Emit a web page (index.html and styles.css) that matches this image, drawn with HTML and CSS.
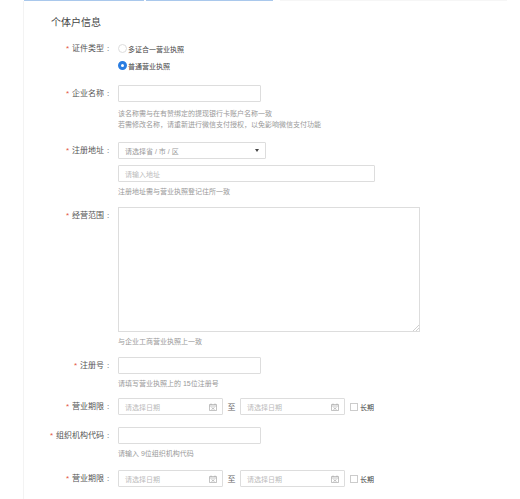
FILE: index.html
```html
<!DOCTYPE html>
<html lang="zh-CN">
<head>
    <meta charset="UTF-8">
    <title>个体户信息</title>
    <link rel="stylesheet" href="styles.css">
</head>
<body>
    <div class="tabs">
        <div class="tab tab-one"></div>
        <div class="tab tab-two"></div>
        <div class="tab tab-rest"></div>
    </div>
    <div class="panel">
        <h2 class="title">个体户信息</h2>

        <div class="row row-type">
            <label class="label"><i>*</i>证件类型<span class="colon">:</span></label>
            <div class="field">
                <div class="radio-line"><span class="radio"></span>多证合一营业执照</div>
                <div class="radio-line"><span class="radio on"></span>普通营业执照</div>
            </div>
        </div>

        <div class="row row-name">
            <label class="label"><i>*</i>企业名称<span class="colon">:</span></label>
            <div class="field">
                <div class="input short"></div>
                <p class="help first">该名称需与在有赞绑定的提现银行卡账户名称一致</p>
                <p class="help">若需修改名称，请重新进行微信支付授权，以免影响微信支付功能</p>
            </div>
        </div>

        <div class="row row-address">
            <label class="label"><i>*</i>注册地址<span class="colon">:</span></label>
            <div class="field">
                <div class="input select"><span class="hint">请选择省 / 市 / 区</span><span class="caret"></span></div>
                <div class="input wide"><span class="hint">请输入地址</span></div>
                <p class="help">注册地址需与营业执照登记住所一致</p>
            </div>
        </div>

        <div class="row row-scope">
            <label class="label"><i>*</i>经营范围<span class="colon">:</span></label>
            <div class="field">
                <div class="textarea">
                    <svg class="grip" width="6" height="6" viewBox="0 0 6 6"><path d="M0 6 6 0M3 6 6 3" stroke="#bbb" stroke-width="0.7"/></svg>
                </div>
                <p class="help">与企业工商营业执照上一致</p>
            </div>
        </div>

        <div class="row row-number">
            <label class="label"><i>*</i>注册号<span class="colon">:</span></label>
            <div class="field">
                <div class="input short"></div>
                <p class="help">请填写营业执照上的 15位注册号</p>
            </div>
        </div>

        <div class="row row-date">
            <label class="label"><i>*</i>营业期限<span class="colon">:</span></label>
            <div class="field dates">
                <div class="input date"><span class="hint">请选择日期</span><svg class="cal" width="8" height="8" viewBox="0 0 8 8"><path d="M.5 1.500h7v6h-7zM.5 3h7M2 .5v1.500M6 .5v1.500M2.500 4.500l3 2M5.500 4.500l-3 2" fill="none" stroke="#aaa" stroke-width="0.7"/></svg></div>
                <span class="to">至</span>
                <div class="input date"><span class="hint">请选择日期</span><svg class="cal" width="8" height="8" viewBox="0 0 8 8"><path d="M.5 1.500h7v6h-7zM.5 3h7M2 .5v1.500M6 .5v1.500M2.500 4.500l3 2M5.500 4.500l-3 2" fill="none" stroke="#aaa" stroke-width="0.7"/></svg></div>
                <span class="check"></span><span class="long">长期</span>
            </div>
        </div>

        <div class="row row-org">
            <label class="label"><i>*</i>组织机构代码<span class="colon">:</span></label>
            <div class="field">
                <div class="input short"></div>
                <p class="help">请输入 9位组织机构代码</p>
            </div>
        </div>

        <div class="row row-date-last">
            <label class="label"><i>*</i>营业期限<span class="colon">:</span></label>
            <div class="field dates">
                <div class="input date"><span class="hint">请选择日期</span><svg class="cal" width="8" height="8" viewBox="0 0 8 8"><path d="M.5 1.500h7v6h-7zM.5 3h7M2 .5v1.500M6 .5v1.500M2.500 4.500l3 2M5.500 4.500l-3 2" fill="none" stroke="#aaa" stroke-width="0.7"/></svg></div>
                <span class="to">至</span>
                <div class="input date"><span class="hint">请选择日期</span><svg class="cal" width="8" height="8" viewBox="0 0 8 8"><path d="M.5 1.500h7v6h-7zM.5 3h7M2 .5v1.500M6 .5v1.500M2.500 4.500l3 2M5.500 4.500l-3 2" fill="none" stroke="#aaa" stroke-width="0.7"/></svg></div>
                <span class="check"></span><span class="long">长期</span>
            </div>
        </div>
    </div>
</body>
</html>
```

FILE: styles.css
```css
html, body {
    margin: 0;
    height: 499px;
    overflow: hidden;
}
body {
    font-family: "Liberation Sans", "Noto Sans CJK SC", sans-serif;
    font-size: 8px;
    color: #555;
    background-color: #fff;
}
.tabs {
    display: flex;
    height: 1px;
    padding-left: 24px;
}
.tab-one {
    width: 120px;
    background-color: #a9c8ec;
}
.tab-two {
    width: 127px;
    margin-left: 2px;
    background-color: #a9c8ec;
}
.tab-rest {
    width: 227px;
    margin-left: 7px;
    background-color: #f6f6f6;
}
.panel {
    margin-left: 23px;
    width: 482px;
    height: 498px;
    box-sizing: border-box;
    background: #fff;
    border-left: 1px solid #f3f3f3;
    padding-top: 16px;
}
.title {
    margin: 0 0 0 27px;
    font-size: 10px;
    line-height: 12px;
    font-weight: normal;
    color: #444;
}
.row {
    display: flex;
}
.label {
    width: 88px;
    flex: none;
    margin-right: 6px;
    text-align: right;
    line-height: 17px;
    white-space: nowrap;
    color: #555;
}
.label i {
    font-style: normal;
    color: #e4553f;
    margin-right: 3px;
}
.colon {
    display: inline-block;
    width: 8px;
    text-align: center;
}
.field {
    flex: 1;
}
.row-type { margin-top: 11px; }
.row-name { margin-top: 11px; }
.row-address { margin-top: 12px; }
.row-scope { margin-top: 10px; }
.row-number { margin-top: 10px; }
.row-date { margin-top: 9px; }
.row-org { margin-top: 12px; }
.row-date-last { margin-top: 11px; }

.radio-line {
    display: flex;
    align-items: center;
    height: 17px;
    font-size: 7px;
    color: #444;
}
.radio {
    width: 9px;
    height: 9px;
    box-sizing: border-box;
    border: 1px solid #ddd;
    border-radius: 50%;
    margin-right: 1px;
}
.radio.on {
    border: 3px solid #2a7de1;
    background-color: #fff;
}
.input {
    height: 17px;
    box-sizing: border-box;
    border: 1px solid #ddd;
    border-radius: 1px;
    background: #fff;
    display: flex;
    align-items: center;
    padding-left: 6px;
}
.short { width: 143px; }
.wide { width: 257px; margin-top: 6px; }
.select {
    width: 148px;
    justify-content: space-between;
    padding-right: 6px;
}
.hint {
    font-size: 7px;
    color: #bbb;
}
.select .hint { color: #999; }
.caret {
    width: 0;
    height: 0;
    border-left: 2px solid transparent;
    border-right: 2px solid transparent;
    border-top: 3px solid #444;
}
.textarea {
    position: relative;
    width: 302px;
    height: 125px;
    box-sizing: border-box;
    border: 1px solid #ddd;
    background: #fff;
}
.grip {
    position: absolute;
    right: 0;
    bottom: 0;
}
.help {
    margin: 0;
    font-size: 7px;
    line-height: 11px;
    color: #999;
}
.input + .help, .textarea + .help { margin-top: 4px; }
.help.first { margin-top: 6px; }
.dates {
    display: flex;
    align-items: center;
    height: 17px;
}
.date {
    width: 105px;
    justify-content: space-between;
    padding-right: 5px;
}
.to {
    width: 17px;
    text-align: center;
    color: #666;
}
.check {
    width: 8px;
    height: 8px;
    box-sizing: border-box;
    border: 1px solid #ccc;
    background: #fff;
    margin-left: 5px;
}
.long {
    margin-left: 2px;
    font-size: 7px;
    color: #444;
}
```
